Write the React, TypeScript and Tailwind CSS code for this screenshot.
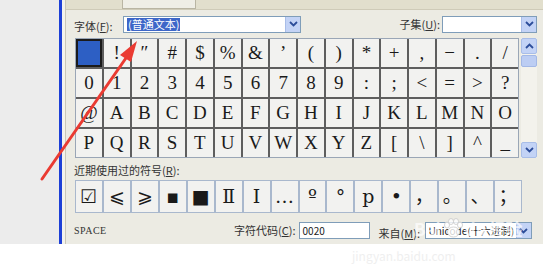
import React from 'react';

const ROWS = [
  [' ', '!', '″', '#', '$', '%', '&', '’', '(', ')', '*', '+', ',', '−', '.', '/'],
  ['0', '1', '2', '3', '4', '5', '6', '7', '8', '9', ':', ';', '<', '=', '>', '?'],
  ['@', 'A', 'B', 'C', 'D', 'E', 'F', 'G', 'H', 'I', 'J', 'K', 'L', 'M', 'N', 'O'],
  ['P', 'Q', 'R', 'S', 'T', 'U', 'V', 'W', 'X', 'Y', 'Z', '[', '\\', ']', '^', '_'],
];

const RECENT = ['☑', '⩽', '⩾', '▪', '■', 'Ⅱ', 'Ⅰ', '…', 'º', '°', 'p', '•', '，', '。', '、', '；'];

function Chevron({ up = false }: { up?: boolean }) {
  return (
    <svg width="9" height="6" viewBox="0 0 9 6" className={up ? 'rotate-180' : ''}>
      <path d="M1 1 L4.5 4.5 L8 1" fill="none" stroke="#2c4d9a" strokeWidth="1.8" />
    </svg>
  );
}

function DropButton() {
  return (
    <div className="w-[15px] h-full flex items-center justify-center bg-[#c3d3f6] border-l border-[#a8bde8]">
      <Chevron />
    </div>
  );
}

function Label({ text, k }: { text: string; k: string }) {
  return (
    <span className="text-[11px] text-[#333] whitespace-nowrap">
      {text}(<span className="underline">{k}</span>):
    </span>
  );
}

export default function App() {
  return (
    <div className="relative w-[543px] h-[269px] bg-white overflow-hidden" style={{ fontFamily: '"Noto Sans CJK SC", "Liberation Sans", sans-serif' }}>
      <div className="flex h-[244px]">
        <div className="w-[59px] bg-[#ececec]" />
        <div className="w-[3px] bg-[#1d3fd6]" />
        <div className="w-[4px] bg-[#f3f2ec] border-r border-[#c9c6b8]" />
        <div className="flex-1 flex flex-col bg-[#ecebe3]">
          {/* cut-off row above */}
          <div className="h-[10px] flex bg-[#e2dfcd] border-b border-[#cfcbb8]">
            <div className="w-[56px]" />
            <div className="w-[74px] h-[9px] border border-t-0 border-[#b9b5a3] bg-[#efeee6]" />
          </div>

          {/* font row */}
          <div className="flex items-center h-[18px] mt-[5px] pl-[8px] pr-[6px]">
            <div className="w-[49px]">
              <Label text="字体" k="F" />
            </div>
            <div className="flex w-[178px] h-[17px] border border-[#7f9db9] bg-white">
              <div className="flex-1 flex items-center pl-[3px]">
                <span className="bg-[#3d66c8] text-white text-[11px] leading-[13px] px-[1px]">(普通文本)</span>
              </div>
              <DropButton />
            </div>
            <div className="flex-1 flex justify-end pr-[2px]">
              <Label text="子集" k="U" />
            </div>
            <div className="flex w-[95px] h-[17px] border border-[#7f9db9] bg-white">
              <div className="flex-1" />
              <DropButton />
            </div>
          </div>

          {/* symbol grid */}
          <div className="flex mt-[5px] pl-[9px]">
            <div className="w-[444px] h-[120px] border border-[#9aa6b6] bg-[#5e5e5e]">
              <div className="grid grid-cols-16 grid-rows-4 gap-[2px] h-full">
                {ROWS.flat().map((ch, i) => (
                  <div
                    key={i}
                    className={`flex items-center justify-center text-[19px] text-[#1a1a1a] ${i === 0 ? 'bg-[#2d5fc4] border-2 border-[#1b1b1b]' : 'bg-[#f2f2f0]'}`}
                    style={{ fontFamily: '"Liberation Serif", "Noto Sans CJK SC", serif' }}
                  >
                    {ch}
                  </div>
                ))}
              </div>
            </div>
            <div className="ml-[2px] w-[16px] h-[120px] flex flex-col bg-[#f3f2ec]">
              <div className="h-[16px] flex items-center justify-center bg-[#c3d3f6] border border-[#a8bde8] rounded-[2px]">
                <Chevron up />
              </div>
              <div className="h-[12px] mt-[1px] bg-[#bccdf3] border border-[#a3b8e6] rounded-[2px]" />
              <div className="flex-1" />
              <div className="h-[16px] flex items-center justify-center bg-[#c3d3f6] border border-[#a8bde8] rounded-[2px]">
                <Chevron />
              </div>
            </div>
          </div>

          {/* recent */}
          <div className="mt-[5px] pl-[8px] h-[14px] flex items-center">
            <Label text="近期使用过的符号" k="R" />
          </div>
          <div className="mt-[3px] ml-[9px] w-[447px] h-[33px] border border-[#a9b8cd] bg-[#a9b8cd]">
            <div className="grid grid-cols-16 gap-[2px] h-full">
              {RECENT.map((ch, i) => (
                <div
                  key={i}
                  className="flex items-center justify-center bg-[#f2f2f0] text-[19px] text-[#1a1a1a]"
                  style={{ fontFamily: '"DejaVu Serif", "Noto Sans CJK SC", serif' }}
                >
                  {ch}
                </div>
              ))}
            </div>
          </div>

          {/* bottom row */}
          <div className="flex items-center h-[17px] mt-[9px] pl-[8px]">
            <span className="w-[160px] text-[10px] text-[#333] tracking-[0.5px]" style={{ fontFamily: '"Liberation Serif", serif' }}>
              SPACE
            </span>
            <Label text="字符代码" k="C" />
            <div className="ml-[3px] w-[71px] h-[17px] border border-[#7f9db9] bg-white flex items-center pl-[3px] text-[10px] text-[#222]">
              0020
            </div>
            <div className="ml-[9px] w-[46px]">
              <Label text="来自" k="M" />
            </div>
            <div className="flex w-[107px] h-[17px] border border-[#7f9db9] bg-white">
              <div className="flex-1 flex items-center pl-[3px] text-[10px] text-[#222] whitespace-nowrap overflow-hidden">
                Unicode(十六进制)
              </div>
              <DropButton />
            </div>
          </div>
        </div>
      </div>

      {/* watermark */}
      <div className="absolute left-[414px] top-[218px] flex items-center text-white/70 text-[17px] font-bold leading-none pointer-events-none">
        <span>Bai</span>
        <svg width="22" height="20" viewBox="0 0 22 20" className="mx-[1px]">
          <g fill="#ffffff" fillOpacity="0.8" stroke="#c9c9c9" strokeWidth="0.8">
            <ellipse cx="5" cy="7" rx="2.5" ry="3" />
            <ellipse cx="9" cy="3.5" rx="2.5" ry="3" />
            <ellipse cx="14" cy="3.5" rx="2.5" ry="3" />
            <ellipse cx="18" cy="7" rx="2.5" ry="3" />
            <ellipse cx="11.5" cy="14" rx="6" ry="5" />
          </g>
        </svg>
        <span>du</span>
        <span className="ml-[2px]">经验</span>
      </div>
      <div className="absolute left-[352px] top-[247px] text-[12px] text-[#efefef] pointer-events-none">jingyan.baidu.com</div>

      {/* red arrow */}
      <svg className="absolute left-0 top-0 pointer-events-none" width="543" height="269">
        <line x1="42" y1="179" x2="126" y2="58" stroke="#ea3b32" strokeWidth="3" strokeLinecap="round" />
        <polygon points="137,41 131,62 120,55" fill="#ea3b32" />
      </svg>
    </div>
  );
}
